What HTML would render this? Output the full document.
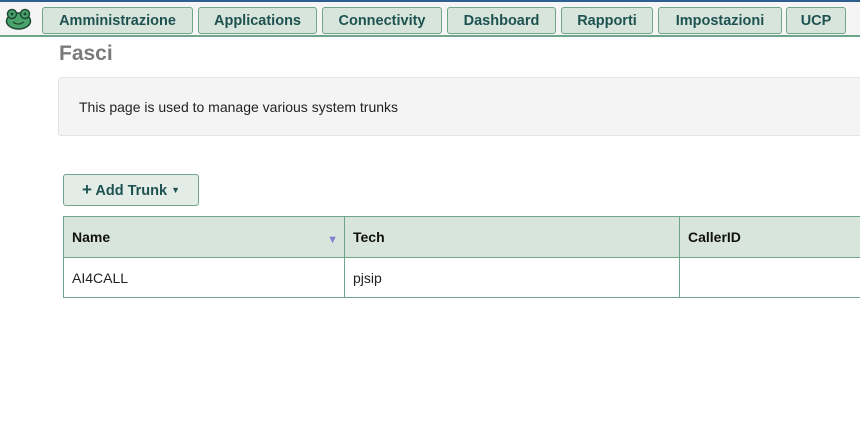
<!DOCTYPE html>
<html><head><meta charset="utf-8">
<style>
*{box-sizing:border-box;margin:0;padding:0}
body{width:860px;height:436px;overflow:hidden;background:#fff;font-family:"Liberation Sans",sans-serif;position:relative}
.top{position:absolute;left:0;top:0;width:860px;height:2px;background:#2f5f8f}
.nav{position:absolute;left:0;top:2px;width:860px;height:35px;background:#f5f5f5;border-bottom:2px solid #6fa58a}
.btn{position:absolute;top:5px;height:27px;background:#d8e5dd;border:1px solid #6fa58a;border-radius:3px;color:#1e5250;font-weight:bold;font-size:14.5px;text-align:center;line-height:26px}
h1{position:absolute;left:59px;top:42px;font-size:21px;color:#7b7b7b;font-weight:bold}
.info{position:absolute;left:58px;top:77px;width:810px;height:59px;background:#f4f4f4;border:1px solid #e4e4e4;border-radius:3px;font-size:14px;color:#222;padding:21px 0 0 20px}
.add{position:absolute;left:63px;top:174px;width:136px;height:32px;background:#e3ece6;border:1px solid #6fa58a;border-radius:3px;color:#1e5250;font-weight:bold;font-size:14.5px;line-height:30px;text-align:center}
table{position:absolute;left:63px;top:216px;border-collapse:collapse;width:830px}
td,th{border:1px solid #6fa58a;text-align:left;font-size:14px;padding:0 8px}
th{background:#d8e5dd;height:41px;color:#111}
td{height:40px;color:#222}
</style></head><body>
<div class="top"></div>
<div class="nav">
<svg style="position:absolute;left:5px;top:6px" width="27" height="22" viewBox="0 0 27 22"><ellipse cx="13.5" cy="13" rx="12" ry="8" fill="#4aa36a" stroke="#1d4a35" stroke-width="1.5"/><circle cx="7" cy="6" r="4.5" fill="#4aa36a" stroke="#1d4a35" stroke-width="1.5"/><circle cx="20" cy="6" r="4.5" fill="#4aa36a" stroke="#1d4a35" stroke-width="1.5"/><circle cx="7" cy="6" r="1.5" fill="#1d4a35"/><circle cx="20" cy="6" r="1.5" fill="#1d4a35"/><path d="M8 14 Q13 18 19 14" stroke="#1d4a35" stroke-width="1.2" fill="none"/></svg>
<div class="btn" style="left:42px;width:151px">Amministrazione</div>
<div class="btn" style="left:198px;width:119px">Applications</div>
<div class="btn" style="left:322px;width:120px">Connectivity</div>
<div class="btn" style="left:447px;width:109px">Dashboard</div>
<div class="btn" style="left:561px;width:92px">Rapporti</div>
<div class="btn" style="left:658px;width:124px">Impostazioni</div>
<div class="btn" style="left:786px;width:60px">UCP</div>
</div>
<h1>Fasci</h1>
<div class="info">This page is used to manage various system trunks</div>
<div class="add"><b style="font-size:17px">+</b> Add Trunk <span style="font-size:9px;vertical-align:2px">▼</span></div>
<table>
<tr><th style="width:281px;position:relative">Name<span style="position:absolute;right:6px;top:17px;font-size:11px;color:#8080cc">▼</span></th><th style="width:335px">Tech</th><th>CallerID</th></tr>
<tr><td>AI4CALL</td><td>pjsip</td><td></td></tr>
</table>
</body></html>
